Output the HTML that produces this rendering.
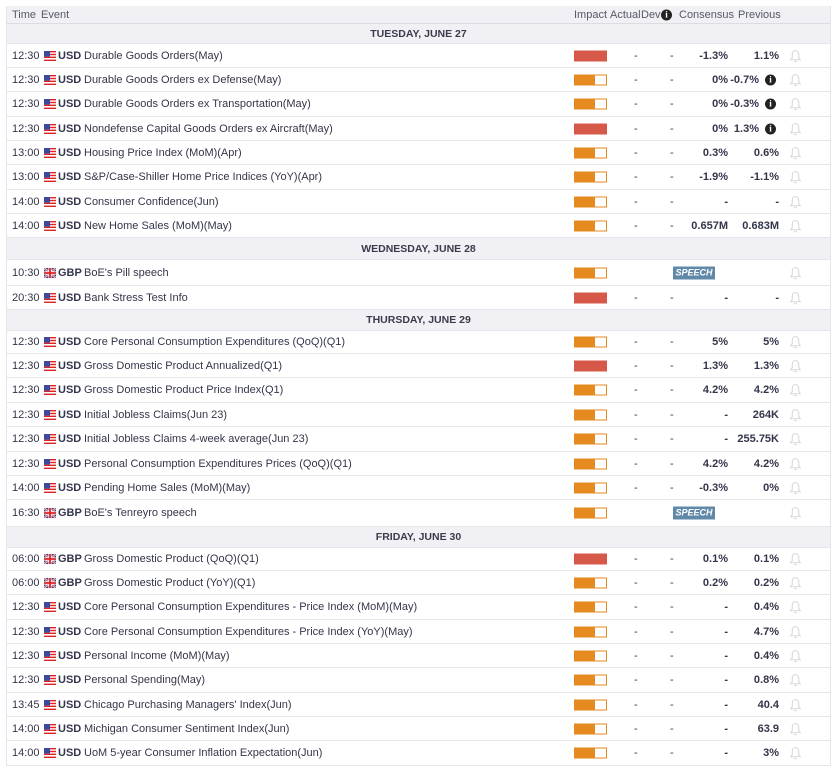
<!DOCTYPE html>
<html><head><meta charset="utf-8"><style>
*{margin:0;padding:0;box-sizing:border-box}
body{width:836px;height:771px;background:#fff;font-family:"Liberation Sans",Arial,sans-serif;font-size:11px;color:#33364a;overflow:hidden;position:relative}
#w{position:absolute;left:6px;top:6px;width:825px;border-left:1px solid #e4e4ea;border-right:1px solid #e4e4ea}
.r{position:relative;border-bottom:1px solid #e6e6eb;background:#fff}
.r>*{position:absolute;top:50%;transform:translateY(-50%);white-space:nowrap}
.hd{background:#f0f0f5;height:18px;border-bottom:1px solid #dcdce3;color:#555a66}
.dh{background:#f0f0f5;border-bottom:1px solid #e6e6eb}
.dh span{left:0;right:0;text-align:center;font-weight:bold;color:#3a3c4c;font-size:10.5px}
.t{left:5px}.f{left:37px;width:12px;height:10px}.c{left:51px;font-weight:bold}.e{left:77px}
.b{left:567px;width:33px;height:11px;border:1px solid #e68a1f;background:linear-gradient(90deg,#e68a1f 0 20px,#fff 20px)}
.b.h{border-color:#d55848;background:#d55848}
.a{left:627px}.d{left:663px}
.cn{right:102px;font-weight:bold}.pv{right:51px;font-weight:bold}.pv.i{right:71px}
.ic{left:758px;width:11px;height:11px;border-radius:50%;background:#222;color:#fff;font-size:9px;font-weight:bold;text-align:center;line-height:11px;font-family:"Liberation Serif",serif}
.bl{left:782px;width:13px;height:14px}
.sp{left:666px;width:42px;height:13px;background:#5f88a9;color:#fff;font-weight:bold;font-style:italic;font-size:9px;text-align:center;line-height:13px}
</style></head><body>
<svg width="0" height="0" style="position:absolute"><defs>
<symbol id="us" viewBox="0 0 12 10"><rect width="12" height="10" fill="#fff"/><g fill="#d22"><rect y="0" width="12" height="1.4"/><rect y="2.8" width="12" height="1.4"/><rect y="5.6" width="12" height="1.4"/><rect y="8.6" width="12" height="1.4"/></g><rect width="6" height="5.6" fill="#3b4a9c"/></symbol>
<symbol id="gb" viewBox="0 0 12 10"><rect width="12" height="10" fill="#2b3a8c"/><path d="M0 0L12 10M12 0L0 10" stroke="#fff" stroke-width="2"/><path d="M0 0L12 10M12 0L0 10" stroke="#d22" stroke-width=".7"/><path d="M6 0V10M0 5H12" stroke="#fff" stroke-width="3.2"/><path d="M6 0V10M0 5H12" stroke="#d22" stroke-width="1.8"/></symbol>
<symbol id="bell" viewBox="0 0 12 13"><path d="M6 1.5C3.8 1.5 3 3.2 3 5V8L1.5 10H10.5L9 8V5C9 3.2 8.2 1.5 6 1.5ZM4.8 11.2Q6 12.6 7.2 11.2" fill="none" stroke="#d8d8dc" stroke-width="1"/></symbol>
</defs></svg>
<div id="w">
<div class="r hd"><span style="left:5px">Time</span><span style="left:34px">Event</span><span style="left:567px">Impact</span><span style="left:603px">Actual</span><span style="left:634px">Dev</span><span class="ic" style="left:654px">i</span><span style="left:672px">Consensus</span><span style="left:731px">Previous</span></div>

<div class="r dh" style="height:20px"><span>TUESDAY, JUNE 27</span></div>
<div class="r" style="height:24px"><span class="t">12:30</span><svg class="f"><use href="#us"/></svg><span class="c">USD</span><span class="e">Durable Goods Orders(May)</span><i class="b h"></i><span class="a">-</span><span class="d">-</span><span class="cn">-1.3%</span><span class="pv">1.1%</span><svg class="bl"><use href="#bell"/></svg></div>
<div class="r" style="height:24px"><span class="t">12:30</span><svg class="f"><use href="#us"/></svg><span class="c">USD</span><span class="e">Durable Goods Orders ex Defense(May)</span><i class="b"></i><span class="a">-</span><span class="d">-</span><span class="cn">0%</span><span class="pv i">-0.7%</span><span class="ic">i</span><svg class="bl"><use href="#bell"/></svg></div>
<div class="r" style="height:25px"><span class="t">12:30</span><svg class="f"><use href="#us"/></svg><span class="c">USD</span><span class="e">Durable Goods Orders ex Transportation(May)</span><i class="b"></i><span class="a">-</span><span class="d">-</span><span class="cn">0%</span><span class="pv i">-0.3%</span><span class="ic">i</span><svg class="bl"><use href="#bell"/></svg></div>
<div class="r" style="height:24px"><span class="t">12:30</span><svg class="f"><use href="#us"/></svg><span class="c">USD</span><span class="e">Nondefense Capital Goods Orders ex Aircraft(May)</span><i class="b h"></i><span class="a">-</span><span class="d">-</span><span class="cn">0%</span><span class="pv i">1.3%</span><span class="ic">i</span><svg class="bl"><use href="#bell"/></svg></div>
<div class="r" style="height:24px"><span class="t">13:00</span><svg class="f"><use href="#us"/></svg><span class="c">USD</span><span class="e">Housing Price Index (MoM)(Apr)</span><i class="b"></i><span class="a">-</span><span class="d">-</span><span class="cn">0.3%</span><span class="pv">0.6%</span><svg class="bl"><use href="#bell"/></svg></div>
<div class="r" style="height:25px"><span class="t">13:00</span><svg class="f"><use href="#us"/></svg><span class="c">USD</span><span class="e">S&amp;P/Case-Shiller Home Price Indices (YoY)(Apr)</span><i class="b"></i><span class="a">-</span><span class="d">-</span><span class="cn">-1.9%</span><span class="pv">-1.1%</span><svg class="bl"><use href="#bell"/></svg></div>
<div class="r" style="height:24px"><span class="t">14:00</span><svg class="f"><use href="#us"/></svg><span class="c">USD</span><span class="e">Consumer Confidence(Jun)</span><i class="b"></i><span class="a">-</span><span class="d">-</span><span class="cn">-</span><span class="pv">-</span><svg class="bl"><use href="#bell"/></svg></div>
<div class="r" style="height:24px"><span class="t">14:00</span><svg class="f"><use href="#us"/></svg><span class="c">USD</span><span class="e">New Home Sales (MoM)(May)</span><i class="b"></i><span class="a">-</span><span class="d">-</span><span class="cn">0.657M</span><span class="pv">0.683M</span><svg class="bl"><use href="#bell"/></svg></div>

<div class="r dh" style="height:22px"><span>WEDNESDAY, JUNE 28</span></div>
<div class="r" style="height:26px"><span class="t">10:30</span><svg class="f"><use href="#gb"/></svg><span class="c">GBP</span><span class="e">BoE's Pill speech</span><i class="b"></i><span class="sp">SPEECH</span><svg class="bl"><use href="#bell"/></svg></div>
<div class="r" style="height:24px"><span class="t">20:30</span><svg class="f"><use href="#us"/></svg><span class="c">USD</span><span class="e">Bank Stress Test Info</span><i class="b h"></i><span class="a">-</span><span class="d">-</span><span class="cn">-</span><span class="pv">-</span><svg class="bl"><use href="#bell"/></svg></div>

<div class="r dh" style="height:21px"><span>THURSDAY, JUNE 29</span></div>
<div class="r" style="height:23px"><span class="t">12:30</span><svg class="f"><use href="#us"/></svg><span class="c">USD</span><span class="e">Core Personal Consumption Expenditures (QoQ)(Q1)</span><i class="b"></i><span class="a">-</span><span class="d">-</span><span class="cn">5%</span><span class="pv">5%</span><svg class="bl"><use href="#bell"/></svg></div>
<div class="r" style="height:24px"><span class="t">12:30</span><svg class="f"><use href="#us"/></svg><span class="c">USD</span><span class="e">Gross Domestic Product Annualized(Q1)</span><i class="b h"></i><span class="a">-</span><span class="d">-</span><span class="cn">1.3%</span><span class="pv">1.3%</span><svg class="bl"><use href="#bell"/></svg></div>
<div class="r" style="height:25px"><span class="t">12:30</span><svg class="f"><use href="#us"/></svg><span class="c">USD</span><span class="e">Gross Domestic Product Price Index(Q1)</span><i class="b"></i><span class="a">-</span><span class="d">-</span><span class="cn">4.2%</span><span class="pv">4.2%</span><svg class="bl"><use href="#bell"/></svg></div>
<div class="r" style="height:24px"><span class="t">12:30</span><svg class="f"><use href="#us"/></svg><span class="c">USD</span><span class="e">Initial Jobless Claims(Jun 23)</span><i class="b"></i><span class="a">-</span><span class="d">-</span><span class="cn">-</span><span class="pv">264K</span><svg class="bl"><use href="#bell"/></svg></div>
<div class="r" style="height:25px"><span class="t">12:30</span><svg class="f"><use href="#us"/></svg><span class="c">USD</span><span class="e">Initial Jobless Claims 4-week average(Jun 23)</span><i class="b"></i><span class="a">-</span><span class="d">-</span><span class="cn">-</span><span class="pv">255.75K</span><svg class="bl"><use href="#bell"/></svg></div>
<div class="r" style="height:24px"><span class="t">12:30</span><svg class="f"><use href="#us"/></svg><span class="c">USD</span><span class="e">Personal Consumption Expenditures Prices (QoQ)(Q1)</span><i class="b"></i><span class="a">-</span><span class="d">-</span><span class="cn">4.2%</span><span class="pv">4.2%</span><svg class="bl"><use href="#bell"/></svg></div>
<div class="r" style="height:24px"><span class="t">14:00</span><svg class="f"><use href="#us"/></svg><span class="c">USD</span><span class="e">Pending Home Sales (MoM)(May)</span><i class="b"></i><span class="a">-</span><span class="d">-</span><span class="cn">-0.3%</span><span class="pv">0%</span><svg class="bl"><use href="#bell"/></svg></div>
<div class="r" style="height:27px"><span class="t">16:30</span><svg class="f"><use href="#gb"/></svg><span class="c">GBP</span><span class="e">BoE's Tenreyro speech</span><i class="b"></i><span class="sp">SPEECH</span><svg class="bl"><use href="#bell"/></svg></div>

<div class="r dh" style="height:21px"><span>FRIDAY, JUNE 30</span></div>
<div class="r" style="height:23px"><span class="t">06:00</span><svg class="f"><use href="#gb"/></svg><span class="c">GBP</span><span class="e">Gross Domestic Product (QoQ)(Q1)</span><i class="b h"></i><span class="a">-</span><span class="d">-</span><span class="cn">0.1%</span><span class="pv">0.1%</span><svg class="bl"><use href="#bell"/></svg></div>
<div class="r" style="height:24px"><span class="t">06:00</span><svg class="f"><use href="#gb"/></svg><span class="c">GBP</span><span class="e">Gross Domestic Product (YoY)(Q1)</span><i class="b"></i><span class="a">-</span><span class="d">-</span><span class="cn">0.2%</span><span class="pv">0.2%</span><svg class="bl"><use href="#bell"/></svg></div>
<div class="r" style="height:25px"><span class="t">12:30</span><svg class="f"><use href="#us"/></svg><span class="c">USD</span><span class="e">Core Personal Consumption Expenditures - Price Index (MoM)(May)</span><i class="b"></i><span class="a">-</span><span class="d">-</span><span class="cn">-</span><span class="pv">0.4%</span><svg class="bl"><use href="#bell"/></svg></div>
<div class="r" style="height:24px"><span class="t">12:30</span><svg class="f"><use href="#us"/></svg><span class="c">USD</span><span class="e">Core Personal Consumption Expenditures - Price Index (YoY)(May)</span><i class="b"></i><span class="a">-</span><span class="d">-</span><span class="cn">-</span><span class="pv">4.7%</span><svg class="bl"><use href="#bell"/></svg></div>
<div class="r" style="height:24px"><span class="t">12:30</span><svg class="f"><use href="#us"/></svg><span class="c">USD</span><span class="e">Personal Income (MoM)(May)</span><i class="b"></i><span class="a">-</span><span class="d">-</span><span class="cn">-</span><span class="pv">0.4%</span><svg class="bl"><use href="#bell"/></svg></div>
<div class="r" style="height:25px"><span class="t">12:30</span><svg class="f"><use href="#us"/></svg><span class="c">USD</span><span class="e">Personal Spending(May)</span><i class="b"></i><span class="a">-</span><span class="d">-</span><span class="cn">-</span><span class="pv">0.8%</span><svg class="bl"><use href="#bell"/></svg></div>
<div class="r" style="height:24px"><span class="t">13:45</span><svg class="f"><use href="#us"/></svg><span class="c">USD</span><span class="e">Chicago Purchasing Managers' Index(Jun)</span><i class="b"></i><span class="a">-</span><span class="d">-</span><span class="cn">-</span><span class="pv">40.4</span><svg class="bl"><use href="#bell"/></svg></div>
<div class="r" style="height:24px"><span class="t">14:00</span><svg class="f"><use href="#us"/></svg><span class="c">USD</span><span class="e">Michigan Consumer Sentiment Index(Jun)</span><i class="b"></i><span class="a">-</span><span class="d">-</span><span class="cn">-</span><span class="pv">63.9</span><svg class="bl"><use href="#bell"/></svg></div>
<div class="r" style="height:25px"><span class="t">14:00</span><svg class="f"><use href="#us"/></svg><span class="c">USD</span><span class="e">UoM 5-year Consumer Inflation Expectation(Jun)</span><i class="b"></i><span class="a">-</span><span class="d">-</span><span class="cn">-</span><span class="pv">3%</span><svg class="bl"><use href="#bell"/></svg></div>
</div>
</body></html>
